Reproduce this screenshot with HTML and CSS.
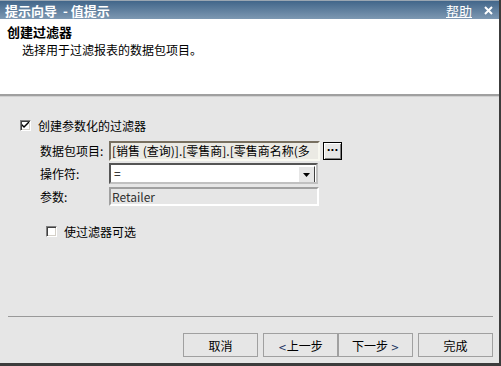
FILE: index.html
```html
<!DOCTYPE html>
<html lang="zh-CN">
<head>
    <meta charset="UTF-8">
    <title>提示向导 - 值提示</title>
    <link rel="stylesheet" href="styles.css">
</head>
<body>
    <div class="dialog">
        <div class="titlebar">
            <span class="title">提示向导 &nbsp;- 值提示</span>
            <a class="help" href="#">帮助</a>
            <span class="close">
                <svg width="9" height="9" viewBox="0 0 9 9"><path d="M1 1 L8 8 M8 1 L1 8" stroke="#fff" stroke-width="2"/></svg>
            </span>
        </div>

        <div class="header">
            <div class="header-title">创建过滤器</div>
            <div class="header-desc">选择用于过滤报表的数据包项目。</div>
        </div>

        <div class="content">
            <label class="check-row">
                <span class="checkbox">
                    <svg width="7" height="7" viewBox="0 0 7 7"><path d="M0 2 L0 4 L2 6 L7 1 L7 -1 L2 4 Z" fill="#000"/></svg>
                </span>
                创建参数化的过滤器
            </label>

            <div class="form">
                <div class="form-row">
                    <span class="form-label">数据包项目:</span>
                    <div class="field field-readonly">[销售 (查询)].[零售商].[零售商名称(多</div>
                    <button class="browse">···</button>
                </div>
                <div class="form-row">
                    <span class="form-label">操作符:</span>
                    <div class="field field-select">
                        <span class="select-value">=</span>
                        <span class="select-arrow">
                            <svg width="7" height="4" viewBox="0 0 7 4"><path d="M0 0 L7 0 L3.5 4 Z" fill="#000"/></svg>
                        </span>
                    </div>
                </div>
                <div class="form-row">
                    <span class="form-label">参数:</span>
                    <div class="field field-param">Retailer</div>
                </div>
            </div>

            <label class="check-row optional">
                <span class="checkbox"></span>
                使过滤器可选
            </label>
        </div>

        <div class="footer">
            <div class="footer-line"></div>
            <div class="buttons">
                <button class="btn">取消</button>
                <div class="btn-pair">
                    <button class="btn"><span class="arrow">&lt;</span>上一步</button>
                    <button class="btn">下一步 <span class="arrow">&gt;</span></button>
                </div>
                <button class="btn">完成</button>
            </div>
        </div>
    </div>
</body>
</html>
```

FILE: styles.css
```css
body {
    margin: 0;
    font-family: "Noto Sans CJK SC", "Liberation Sans", sans-serif;
    font-size: 12px;
    color: #000;
    background: #e6e6e6;
}
.dialog {
    width: 501px;
    height: 366px;
    box-sizing: border-box;
    border-right: 2px solid #3c3c3c;
    border-bottom: 3px solid #3c3c3c;
    background: #e6e6e6;
    display: flex;
    flex-direction: column;
}

/* 标题栏 */
.titlebar {
    height: 18px;
    border-top: 1px solid #9aa6b2;
    background: linear-gradient(#42668a, #7d98b2);
    display: flex;
    align-items: center;
    padding: 0 6px 0 5px;
    color: #fff;
}
.title {
    font-weight: bold;
    font-size: 13px;
    flex: 1;
}
.help {
    color: #fff;
    font-size: 13px;
    margin-right: 12px;
}
.close {
    display: flex;
    align-items: center;
}

/* 头部 */
.header {
    height: 77px;
    box-sizing: border-box;
    background: #fff;
    padding: 4px 7px;
    border-bottom: 2px solid #a0a0a0;
    box-shadow: 0 1px 0 #d0d0d0;
}
.header-title {
    font-weight: bold;
    font-size: 13px;
    line-height: 18px;
}
.header-desc {
    padding-left: 15px;
    line-height: 17px;
}

/* 内容 */
.content {
    flex: 1;
    padding: 21px 0 0 20px;
}
.check-row {
    display: flex;
    align-items: center;
    gap: 7px;
    height: 16px;
}
.checkbox {
    width: 9px;
    height: 9px;
    background: #fff;
    border: 1px solid;
    border-color: #808080 #fff #fff #808080;
    box-shadow: inset 1px 1px 0 #404040, inset -1px -1px 0 #d4d0c8;
    display: flex;
    align-items: center;
    justify-content: center;
    padding: 0;
}
.form {
    padding: 6px 0 0 20px;
}
.form-row {
    display: flex;
    align-items: center;
    height: 23px;
}
.form-label {
    width: 69px;
}
.field {
    width: 205px;
    height: 16px;
    line-height: 16px;
    box-sizing: content-box;
    border: 2px solid;
    border-color: #808080 #fff #fff #808080;
    white-space: nowrap;
    overflow: hidden;
}
.field-readonly {
    background: #ebeae4;
    border-color: #787060 #f8f8f0 #f8f8f0 #787060;
    width: 206px;
    padding-left: 1px;
}
.browse {
    width: 19px;
    height: 18px;
    margin-left: 3px;
    padding: 0;
    border: 1px solid #000;
    background: #e6e6e6;
    box-shadow: inset 1px 1px 0 #fff, inset -1px -1px 0 #808080;
    font-family: "DejaVu Sans", sans-serif;
    font-size: 10px;
    font-weight: bold;
    line-height: 14px;
}
.field-select {
    background: #fff;
    height: 17px;
    display: flex;
    border-color: #555 #c0c0c0 #c0c0c0 #555;
}
.select-value {
    flex: 1;
    padding-left: 3px;
}
.select-arrow {
    width: 15px;
    height: 15px;
    margin: 1px;
    background: #e6e6e6;
    border: 1px solid;
    border-color: #fff #404040 #404040 #fff;
    display: flex;
    align-items: center;
    justify-content: center;
}
.field-param {
    background: #e6e6e6;
    color: #303030;
    border-color: #a0a0a0 #fff #fff #a0a0a0;
    height: 15px;
    line-height: 15px;
    padding-left: 1px;
}
.optional {
    margin: 15px 0 0 26px;
}

/* 底部按钮 */
.footer {
    padding: 0 6px 6px 8px;
}
.footer-line {
    height: 1px;
    background: #999;
    margin-bottom: 16px;
}
.buttons {
    display: flex;
    justify-content: flex-end;
    gap: 5px;
}
.btn-pair {
    display: flex;
}
.btn {
    width: 75px;
    height: 24px;
    border: 1px solid #a0a0a0;
    background: #e6e6e6;
    font-family: inherit;
    font-size: 12px;
    padding: 0;
}
.arrow {
    color: #203060;
    font-family: "DejaVu Sans", sans-serif;
    font-size: 10px;
}
```
